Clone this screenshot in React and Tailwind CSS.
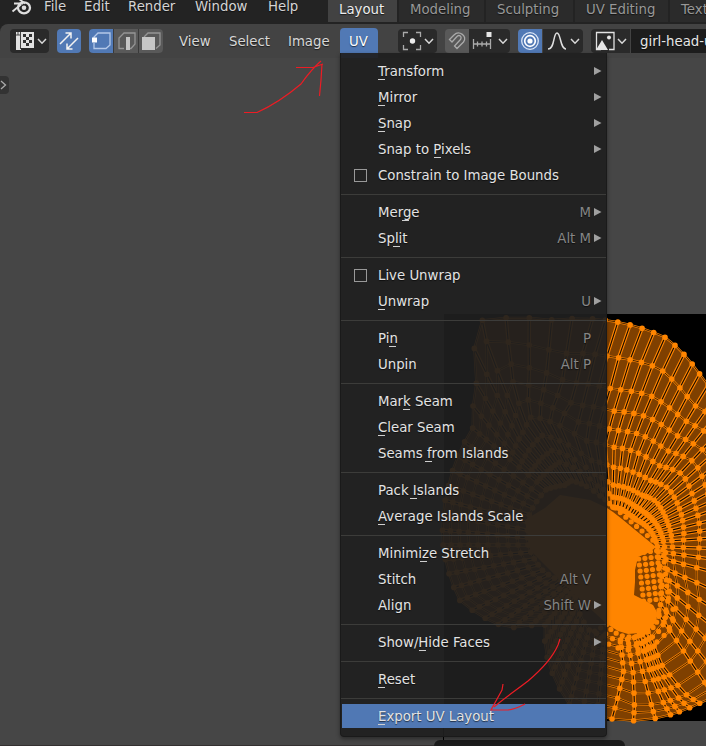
import React from "react";

const MENU = [
  [
    { t: "Transform", u: 0, sub: true },
    { t: "Mirror", u: 0, sub: true },
    { t: "Snap", u: 0, sub: true },
    { t: "Snap to Pixels", u: 56, sub: true },
    { t: "Constrain to Image Bounds", check: true },
  ],
  [
    { t: "Merge", u: 24, k: "M", sub: true },
    { t: "Split", u: 15, k: "Alt M", sub: true },
  ],
  [
    { t: "Live Unwrap", check: true },
    { t: "Unwrap", u: 0, k: "U", sub: true },
  ],
  [
    { t: "Pin", u: 11, k: "P" },
    { t: "Unpin", k: "Alt P" },
  ],
  [
    { t: "Mark Seam", u: 25 },
    { t: "Clear Seam", u: 0 },
    { t: "Seams from Islands", u: 47 },
  ],
  [
    { t: "Pack Islands", u: 32 },
    { t: "Average Islands Scale", u: 0 },
  ],
  [
    { t: "Minimize Stretch", u: 42 },
    { t: "Stitch", k: "Alt V" },
    { t: "Align", k: "Shift W", sub: true },
  ],
  [{ t: "Show/Hide Faces", u: 41, sub: true }],
  [{ t: "Reset", u: 0 }],
  [{ t: "Export UV Layout", u: 0, active: true }],
];

/* UV island: rings around a centre, radius keyed by angle in degrees */
const CX = 612;
const CY = 545;
const KEYS = [
  [-90, [174, 162, 150, 139, 130, 121, 113, 106, 99, 93]],
  [-83, [177, 169, 161, 149, 138, 129, 120, 112, 104, 96]],
  [-75, [179, 172, 165, 153, 141, 130, 120, 111, 103, 95]],
  [-60, [181, 175, 168, 156, 143, 131, 119, 108, 98, 89]],
  [-45, [188, 174, 160, 146, 132, 119, 105, 90, 79, 69]],
  [-20, [172, 158, 142, 124, 106, 88, 75, 65, 57, 49]],
  [0, [165, 148, 132, 116, 101, 87, 71, 60, 52, 45]],
  [25, [172, 155, 138, 122, 107, 92, 76, 60, 49, 40]],
  [45, [180, 164, 148, 132, 117, 100, 80, 62, 46, 35]],
  [60, [187, 162, 144, 127, 109, 92, 75, 58, 45, 35]],
  [75, [214, 183, 154, 133, 114, 96, 76, 59, 47, 37]],
  [90, [224, 188, 156, 134, 115, 98, 78, 60, 48, 38]],
  [105, [233, 198, 168, 145, 127, 108, 88, 74, 62, 52]],
  [122, [263, 240, 215, 193, 173, 152, 130, 112, 98, 76]],
  [128, [217, 200, 186, 172, 158, 144, 128, 112, 98, 76]],
  [140, [182, 173, 164, 154, 144, 133, 121, 109, 98, 86]],
  [160, [174, 166, 158, 148, 138, 128, 118, 108, 98, 88]],
  [180, [169, 161, 152, 143, 134, 124, 114, 104, 94, 84]],
  [200, [162, 154, 145, 136, 126, 116, 106, 96, 84, 74]],
  [218, [134, 126, 118, 110, 102, 94, 86, 78, 70, 60]],
  [229, [102, 97, 92, 87, 82, 77, 72, 67, 62, 56]],
  [238, [125, 119, 113, 107, 100, 94, 88, 82, 76, 68]],
  [255, [165, 157, 148, 138, 129, 120, 111, 103, 96, 88]],
  [270, [174, 162, 150, 139, 130, 121, 113, 106, 99, 93]],
];

function radius(a, k) {
  for (let i = 0; i < KEYS.length - 1; i++) {
    const [a0, r0] = KEYS[i];
    const [a1, r1] = KEYS[i + 1];
    if (a <= a1) {
      const t = (a - a0) / (a1 - a0);
      return r0[k] + (r1[k] - r0[k]) * t;
    }
  }
  return KEYS[KEYS.length - 1][1][k];
}

/* Spokes lean away from the centre line, more so towards the inner rings */
function lean(a) {
  if (a >= 61 && a <= 95) return (a - 61) * 0.11;
  if (a > 95 && a < 140) return (3.74 * (140 - a)) / 45;
  if (a < -60) return (-77 - a) * 0.08;
  return 0;
}

function buildMesh() {
  const angles = [-90, -83, -76, -71, -68, -64.5, -61, -56, -51, -45, -39, -32, -24, -15, -8, -2, 4, 9, 14];
  for (let a = 19; a < 98; a += a < 50 ? 4.6 : a < 61 ? 3.9 : 3.2) angles.push(a);
  for (let a = 100; a < 270; a += 5) angles.push(a);
  const grid = angles.map((ang) =>
    Array.from({ length: 10 }, (_, k) => {
      const th = ang + lean(ang) * Math.min(k, 5);
      const r = radius(th, k);
      const rad = (th * Math.PI) / 180;
      return [+(CX + r * Math.cos(rad)).toFixed(1), +(CY - r * Math.sin(rad)).toFixed(1)];
    })
  );
  const path = (pts) => "M" + pts.map((p) => p.join(" ")).join("L");
  return {
    fill: path(grid.map((c) => c[0])) + "Z",
    rings: Array.from({ length: 10 }, (_, k) => path(grid.map((c) => c[k])) + "Z").join(""),
    spokes: grid.map(path).join(""),
    dots: grid.flat().map((p) => "M" + p.join(" ") + "h.01").join(""),
  };
}
const MESH = buildMesh();

function buildDense() {
  let d = "";
  for (let y = 553; y < 604; y += 6) {
    for (let x = 638; x < 668; x += 6.2) {
      d += `M${(x + ((y - 553) / 6) * 0.7).toFixed(1)} ${(y - (x - 638) * 0.12).toFixed(1)}h.01`;
    }
  }
  for (let row = 0; row < 3; row++) {
    for (let i = 0; i < 12; i++) {
      const an = ((-150 + i * 14) * Math.PI) / 180;
      d += `M${(631 + (28 + row * 7) * Math.cos(an)).toFixed(1)} ${(612 - (25 + row * 6.5) * Math.sin(an)).toFixed(1)}h.01`;
    }
  }
  for (let i = 0; i < 8; i++) d += `M${(615 + i * 5.4).toFixed(1)} ${(508 + i * 4.6).toFixed(1)}h.01`;
  return d;
}
const DENSE = buildDense();

function Canvas() {
  return (
    <svg className="absolute left-0 top-0" width="706" height="746" viewBox="0 0 706 746">
      <path d="M444 314H706V721H444Z" fill="#000" />
      <path d="M443.500 721V746" stroke="#000" />
      <path d={MESH.fill} fill="#7f4000" />
      <path d={MESH.rings} fill="none" stroke="#ff8500" strokeWidth="2.2" />
      <path d={MESH.spokes} fill="none" stroke="#ff8500" strokeWidth="3.400" />
      <path d={MESH.rings} fill="none" stroke="#140a00" strokeWidth=".8" />
      <path d={MESH.spokes} fill="none" stroke="#100800" strokeWidth="1.1" />
      <path d={MESH.dots} stroke="#ff8500" strokeWidth="5.600" strokeLinecap="round" />
      <path d={DENSE} stroke="#ff8500" strokeWidth="5.200" strokeLinecap="round" />
      <path
        d="M525 520L545 508L560 495L590 500L607 508L613 512L622 519L634 529L645 538L656 547L650 552L638 557L635 570L635 582L634 595L644 600L653 605L657 612L656 622L649 630L640 633L628 634L618 631L607 624L570 590L530 550Z"
        fill="#ff8500"
      />
    </svg>
  );
}

function Chevron() {
  return (
    <svg width="10" height="8" viewBox="0 0 10 8" className="shrink-0">
      <path d="M1 2L5 6.200L9 2" fill="none" stroke="#d8d8d8" strokeWidth="1.500" />
    </svg>
  );
}

function Icon({ children, w = 24 }) {
  return (
    <svg width={w} height="24" viewBox={`0 0 ${w} 24`} fill="none" className="shrink-0">
      {children}
    </svg>
  );
}

function TopBar() {
  const tab = "h-[22px] shrink-0 pl-[11px] pt-[2px] leading-4 ";
  return (
    <div className="flex h-6 shrink-0 overflow-hidden bg-[#232323] text-[#d4d4d4]">
      <svg width="44" height="24" viewBox="0 0 44 24" fill="none" className="shrink-0">
        <ellipse cx="24" cy="7.800" rx="6" ry="5.500" stroke="#dedede" strokeWidth="2.300" />
        <circle cx="24" cy="7.800" r="2.300" fill="#dedede" />
        <path d="M12.500 11.500L21 4.500M14 3.500H23M19 -1L25 3.500" stroke="#dedede" strokeWidth="1.900" />
      </svg>
      <div className="flex w-[284px] shrink-0 leading-[13px]">
        <span className="w-10">File</span>
        <span className="w-11">Edit</span>
        <span className="w-[67px]">Render</span>
        <span className="w-[73px]">Window</span>
        <span>Help</span>
      </div>
      <div className="flex gap-[2px] text-[#989898]">
        <div className={tab + "w-[69px] bg-[#424242] text-[#eeeeee]"}>Layout</div>
        <div className={tab + "w-[85px] bg-[#2b2b2b]"}>Modeling</div>
        <div className={tab + "w-[87px] bg-[#2b2b2b]"}>Sculpting</div>
        <div className={tab + "w-[93px] whitespace-nowrap bg-[#2b2b2b]"}>UV Editing</div>
        <div className={tab + "w-[80px] bg-[#2b2b2b]"}>Texture</div>
      </div>
    </div>
  );
}

function Header() {
  const dark = "flex h-6 shrink-0 items-center bg-[#2a2a2a] ";
  return (
    <div className="h-[34px] shrink-0 bg-[#232323]">
      <div className="flex h-full items-start overflow-hidden rounded-tl-lg bg-[#434343] pl-[10px] pt-[5px] text-[#d8d8d8]">
        <div className={dark + "w-[39px] rounded"}>
          <Icon w={27}>
            <path d="M6 3H24V19H11V21H6Z" fill="#e2e2e2" />
            <path d="M8 3V6H6M10.500 6H8M10.500 3V20" stroke="#444" />
            <path d="M13 5h3v3h-3zM19 5h3v3h-3zM16 8h3v3h-3zM13 11h3v3h-3zM19 11h3v3h-3zM16 14h3v3h-3z" fill="#303030" />
          </Icon>
          <Chevron />
        </div>
        <div className="ml-2 size-6 shrink-0 rounded bg-[#5179b5]">
          <Icon>
            <path d="M3 15L14 4M8.500 4H14V9.500M21 9L10 20M10 14.500V20H15.500" stroke="#f2f2f2" strokeWidth="1.500" />
          </Icon>
        </div>
        <div className="ml-2 flex shrink-0 gap-px overflow-hidden rounded bg-[#393939]">
          <div className="bg-[#5179b5]">
            <Icon>
              <path d="M5 9V8L9 4H21V16L17 19.500H5V14" stroke="#b4c8e8" strokeWidth="1.300" />
              <path d="M3 8.500h5v5H3z" fill="#fff" />
            </Icon>
          </div>
          <div className="bg-[#595959]">
            <Icon>
              <path d="M10 19.500H5V9L10 4H21V15L17 19.500H15" stroke="#959595" strokeWidth="1.300" />
              <path d="M12 8h4v13h-4z" fill="#c6c6c6" />
            </Icon>
          </div>
          <div className="bg-[#595959]">
            <Icon>
              <path d="M5 8L9 4H21V16L17 19.500" stroke="#959595" strokeWidth="1.300" />
              <path d="M3 8h13v13H3z" fill="#c6c6c6" />
            </Icon>
          </div>
        </div>
        <span className="ml-4 w-[50px] shrink-0 leading-[26px]">View</span>
        <span className="w-[59px] shrink-0 leading-[26px]">Select</span>
        <span className="w-[52px] shrink-0 leading-[26px]">Image</span>
        <div className="-mt-px h-[30px] w-[38px] shrink-0 rounded-t bg-[#5179b5] pl-[9px] leading-7 text-white">UV</div>
        <div className={dark + "ml-5 w-[39px] rounded"}>
          <Icon w={26}>
            <path d="M5.500 8V3.500H10M18 3.500H22.500V8M22.500 16V20.500H18M10 20.500H5.500V16" stroke="#aaa" strokeWidth="1.300" />
            <circle cx="14.500" cy="12" r="2.700" fill="#eee" />
          </Icon>
          <Chevron />
        </div>
        <div className="ml-2 flex shrink-0 overflow-hidden rounded">
          <div className="bg-[#595959]">
            <Icon>
              <path d="M4.500 10.500L9 6C14 1 23 7 18.500 13L12 19.500L9.500 17L15 11C18 7.500 14 5 11.500 8L7 13Z" stroke="#aaa" strokeWidth="1.300" />
            </Icon>
          </div>
          <div className={dark + "w-[41px]"}>
            <Icon w={29}>
              <path d="M4.500 10V20M21.500 10V20M4.500 15H21.500M8.500 12.500V17.500M13 12.500V17.500M17.500 12.500V17.500" stroke="#aaa" strokeWidth="1.300" />
              <path d="M17.500 3h5v5h-5z" fill="#e6e6e6" />
            </Icon>
            <Chevron />
          </div>
        </div>
        <div className="ml-2 flex shrink-0 overflow-hidden rounded">
          <div className="bg-[#5179b5]">
            <Icon>
              <circle cx="12" cy="12" r="8.300" stroke="#dce6f6" strokeWidth="1.300" />
              <circle cx="12" cy="12" r="5.300" stroke="#fff" strokeWidth="1.700" />
              <circle cx="12" cy="12" r="2.600" fill="#fff" />
            </Icon>
          </div>
          <div className={dark + "ml-px w-10"}>
            <Icon w={27}>
              <path d="M5 20C12 20 10 4 14 4S17 20 23 20" stroke="#e0e0e0" strokeWidth="1.500" />
            </Icon>
            <Chevron />
          </div>
        </div>
        <div className={dark + "ml-2 w-[39px] rounded-l"}>
          <Icon w={26}>
            <path d="M10 20.500H5.500V3.500H23V20.500H18" stroke="#e2e2e2" strokeWidth="1.300" />
            <path d="M5 21L11 11L17 21Z" fill="#e6e6e6" />
            <circle cx="18" cy="8.500" r="2" fill="#e6e6e6" />
          </Icon>
          <Chevron />
        </div>
        <div className="ml-px h-6 w-[76px] shrink-0 whitespace-nowrap bg-[#1d1d1d] pl-[9px] leading-[26px] text-[#e6e6e6]">girl-head-uv</div>
      </div>
    </div>
  );
}

function MenuRow({ item }) {
  return (
    <div className="h-[26px] px-px py-px">
      <div className={"flex h-6 items-center pr-[2px] " + (item.active ? "bg-[#5078b4]" : "")}>
        <div className="flex w-9 shrink-0 pl-3">
          {item.check && <span className="size-[13px] border border-[#999]" />}
        </div>
        <span className="relative h-6 whitespace-nowrap leading-[26px] text-[#e3e3e3]">
          {item.t}
          {item.u !== undefined && (
            <span className="absolute top-[20px] h-px w-[7px] bg-[#cfcfcf]" style={{ left: item.u }} />
          )}
        </span>
        <span className="ml-auto h-6 pr-px leading-[26px] text-[#868686]">{item.k}</span>
        {item.sub ? (
          <svg width="11" height="10" viewBox="0 0 11 10" className="shrink-0">
            <path d="M2 1L9.500 5L2 9Z" fill="#a0a0a0" />
          </svg>
        ) : (
          <span className="w-[11px]" />
        )}
      </div>
    </div>
  );
}

export default function App() {
  return (
    <div
      className="relative flex h-[746px] w-[706px] flex-col overflow-hidden bg-[#464646] text-[13.3px] [text-shadow:0_1px_1px_rgba(0,0,0,0.6)]"
      style={{ fontFamily: '"DejaVu Sans", sans-serif' }}
    >
      <Canvas />
      <div className="relative flex flex-col">
        <TopBar />
        <Header />
      </div>
      <div className="relative mt-[18px] flex h-[18px] w-[9px] items-center rounded-r bg-[#333]">
        <svg width="8" height="12" viewBox="0 0 8 12">
          <path d="M1 2L5.500 6L1 10" fill="none" stroke="#aaa" strokeWidth="1.300" />
        </svg>
      </div>
      <div className="absolute left-[434px] top-[740px] h-5 w-[191px] rounded-md bg-[#1b1b1b]" />
      <div className="absolute left-0 top-[745px] h-px w-[434px] bg-[#343030]" />
      <div className="absolute left-[340px] top-[53px] h-[684px] w-[267px] rounded-b border-x border-b border-[#1a1a1a] bg-[#1f1f1f]/93 pt-[5px] shadow-[0_2px_4px_rgba(0,0,0,0.4)]">
        {MENU.map((group, i) => (
          <div key={i}>
            {i > 0 && (
              <div className="h-[11px] pt-[6px]">
                <div className="h-px bg-[#3c3c3a]" />
              </div>
            )}
            {group.map((item) => (
              <MenuRow key={item.t} item={item} />
            ))}
          </div>
        ))}
      </div>
      <svg className="absolute left-0 top-0" width="706" height="746" viewBox="0 0 706 746" fill="none" stroke="#ed1c24" strokeWidth="1.200">
        <path d="M244 112.500H257C276 104 288 95 301 84C308 74 314 67 321 61M296 67.500H313L323 64M322 64L321 80L319.500 96" />
        <path d="M560 639L558 645C552 659 541 670 528 681C515 691 503 699 494 707M503 684L502 690L491 710H508C516 709 521 706 525 704" />
      </svg>
    </div>
  );
}
